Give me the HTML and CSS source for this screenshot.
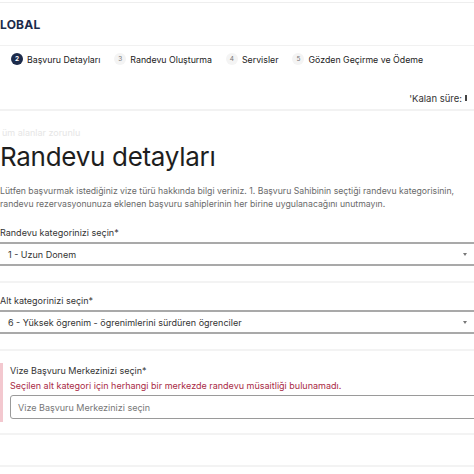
FILE: index.html
```html
<!DOCTYPE html>
<html lang="tr">
<head>
<meta charset="utf-8">
<link rel="stylesheet" href="styles.css">
</head>
<body>
<div class="page">
  <header class="topbar">
    <span class="logo">LOBAL</span>
  </header>
  <nav class="steps">
    <div class="step active"><span class="num">2</span><span>Başvuru Detayları</span></div>
    <div class="step"><span class="num">3</span><span>Randevu Oluşturma</span></div>
    <div class="step"><span class="num">4</span><span>Servisler</span></div>
    <div class="step"><span class="num">5</span><span>Gözden Geçirme ve Ödeme</span></div>
  </nav>
  <div class="timer-row"><span class="timer">'Kalan süre:</span><span class="timer-dot"></span></div>
  <main class="content">
    <p class="required">üm alanlar zorunlu</p>
    <h1 class="title">Randevu detayları</h1>
    <p class="intro">Lütfen başvurmak istediğiniz vize türü hakkında bilgi veriniz. 1. Başvuru Sahibinin seçtiği randevu kategorisinin, randevu rezervasyonunuza eklenen başvuru sahiplerinin her birine uygulanacağını unutmayın.</p>

    <section class="field">
      <label class="label">Randevu kategorinizi seçin*</label>
      <div class="select"><span>1 - Uzun Donem</span><span class="caret"></span></div>
    </section>
    <section class="field">
      <label class="label">Alt kategorinizi seçin*</label>
      <div class="select"><span>6 - Yüksek ögrenim - ögrenimlerini sürdüren ögrenciler</span><span class="caret"></span></div>
    </section>
    <section class="field field-error">
      <div class="error-box">
        <label class="label">Vize Başvuru Merkezinizi seçin*</label>
        <p class="error-msg">Seçilen alt kategori için herhangi bir merkezde randevu müsaitliği bulunamadı.</p>
        <div class="select select-outline"><span class="placeholder">Vize Başvuru Merkezinizi seçin</span><span class="caret caret-red"></span></div>
      </div>
    </section>
    <section class="field field-empty"></section>
  </main>
</div>
</body>
</html>
```

FILE: styles.css
```css
html, body {
  margin: 0;
  padding: 0;
  background: #ffffff;
  overflow: hidden;
}
body {
  width: 474px;
  height: 474px;
  font-family: Inter, "Noto Sans", sans-serif;
  color: #333;
}
.page {
  width: 490px;
  margin-left: -8px;
}
.topbar {
  border-top: 1px solid #eeeeee;
  margin-top: 2px;
  height: 42px;
  display: flex;
  align-items: center;
  padding-left: 8px;
  border-bottom: 1px solid #f1f1f1;
}
.logo {
  font-weight: 700;
  font-size: 12px;
  color: #1c2b4b;
  letter-spacing: 0.2px;
}
.steps {
  display: flex;
  align-items: center;
  height: 26px;
  padding-left: 19px;
  gap: 14px;
  font-size: 8.8px;
  color: #222;
}
.step {
  display: flex;
  align-items: center;
  gap: 4px;
}
.num {
  width: 12px;
  height: 12px;
  border-radius: 50%;
  background: #f4f4f4;
  color: #777;
  font-size: 6.5px;
  display: inline-flex;
  align-items: center;
  justify-content: center;
}
.step.active .num {
  background: #1c2b4b;
  color: #fff;
  font-weight: 700;
}
.timer-row {
  display: flex;
  justify-content: flex-end;
  align-items: flex-end;
  gap: 3px;
  height: 39px;
  padding-bottom: 5px;
  padding-right: 15px;
  border-bottom: 2px solid #f2f2f2;
  box-sizing: border-box;
  font-size: 9.5px;
  color: #333;
}
.timer-dot {
  width: 2px;
  height: 6px;
  background: #444;
  margin-bottom: 3px;
}
.content {
  padding-left: 8px;
}
.required {
  margin: 16px 0 0 2px;
  font-size: 9px;
  color: #e6e6e6;
}
.title {
  margin: 3px 0 0;
  font-weight: 400;
  font-size: 26px;
  color: #1e1e1e;
  letter-spacing: -0.3px;
}
.intro {
  margin: 13px 0 0;
  font-size: 8.7px;
  line-height: 13px;
  color: #6a6a6a;
  width: 470px;
}
.field {
  padding: 12px 0 15px;
  border-bottom: 2px solid #f3f3f3;
}
.field:first-of-type {
  padding-top: 16px;
}
.label {
  display: block;
  font-size: 9px;
  color: #333;
  margin-bottom: 4px;
}
.select {
  margin-left: -4px;
  height: 24px;
  border: 2px solid #a9a9a9;
  border-radius: 3px;
  box-sizing: border-box;
  display: flex;
  align-items: center;
  justify-content: space-between;
  padding: 0 9px 0 10px;
  font-size: 9px;
  color: #333;
  width: 482px;
}
.caret {
  width: 0;
  height: 0;
  border-left: 2.5px solid transparent;
  border-right: 2.5px solid transparent;
  border-top: 3px solid #777;
}
.caret-red {
  border-top-color: #b3243f;
}
.field-error {
  padding: 12px 0 11px;
}
.error-box {
  margin-left: 0;
  border-left: 3px solid #f3c8cf;
  padding: 2px 0 3px 7px;
}
.error-msg {
  margin: 0 0 4px;
  font-size: 9px;
  color: #a92a45;
}
.select-outline {
  border: 1px solid #9a9a9a;
  margin-left: 0;
  width: 478px;
  padding-left: 7px;
}
.placeholder {
  color: #777;
}
.field-empty {
  height: 30px;
  padding: 0;
}
```
